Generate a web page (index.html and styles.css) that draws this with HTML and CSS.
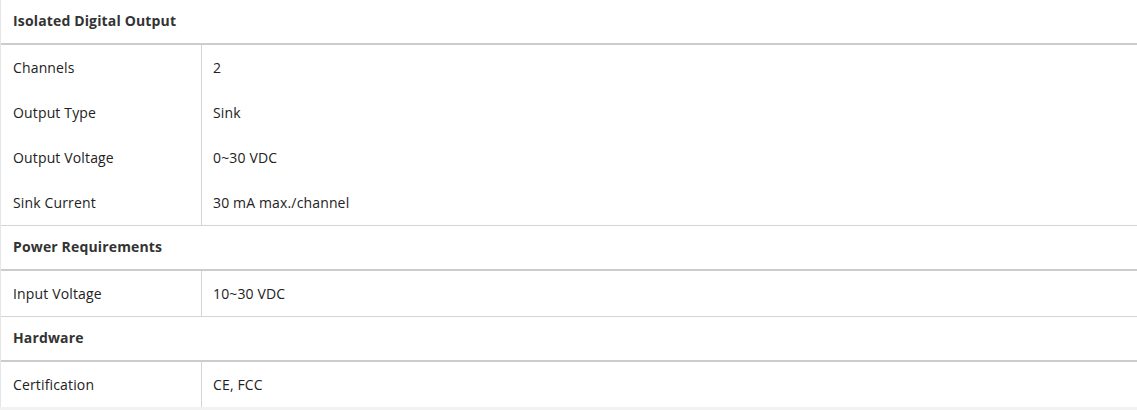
FILE: index.html
```html
<!DOCTYPE html>
<html>
<head>
<meta charset="utf-8">
<link rel="stylesheet" href="styles.css">
</head>
<body>
<div class="spec">
  <div class="group">
    <div class="group-head">Isolated Digital Output</div>
    <div class="rows">
      <div class="row"><div class="key">Channels</div><div class="val">2</div></div>
      <div class="row"><div class="key">Output Type</div><div class="val">Sink</div></div>
      <div class="row"><div class="key">Output Voltage</div><div class="val">0~30 VDC</div></div>
      <div class="row"><div class="key">Sink Current</div><div class="val">30 mA max./channel</div></div>
    </div>
  </div>
  <div class="group">
    <div class="group-head">Power Requirements</div>
    <div class="rows">
      <div class="row"><div class="key">Input Voltage</div><div class="val">10~30 VDC</div></div>
    </div>
  </div>
  <div class="group last">
    <div class="group-head">Hardware</div>
    <div class="rows">
      <div class="row"><div class="key">Certification</div><div class="val">CE, FCC</div></div>
    </div>
  </div>
</div>
</body>
</html>
```

FILE: styles.css
```css
html, body {
  margin: 0;
  padding: 0;
  background: #f2f2f2;
}
body {
  font-family: "Open Sans", "Noto Sans", "Liberation Sans", sans-serif;
  font-size: 14px;
  letter-spacing: 0.15px;
  color: #222;
}
.spec {
  background: #fff;
  border-left: 1px solid #e6e6e6;
}
.group {
  border-bottom: 1px solid #d4d4d4;
}
.group.last {
  border-bottom: none;
}
.group-head {
  height: 43px;
  box-sizing: border-box;
  padding-bottom: 3px;
  display: flex;
  align-items: center;
  padding-left: 12px;
  font-weight: 700;
  color: #333;
  border-bottom: 2px solid #cccccc;
  box-sizing: content-box;
  height: 40px;
}
.row {
  display: grid;
  grid-template-columns: 200px 1fr;
  height: 45px;
}
.key, .val {
  display: flex;
  align-items: center;
}
.key {
  padding-left: 12px;
}
.val {
  border-left: 1px solid #d4d4d4;
  padding-left: 11px;
}
```
